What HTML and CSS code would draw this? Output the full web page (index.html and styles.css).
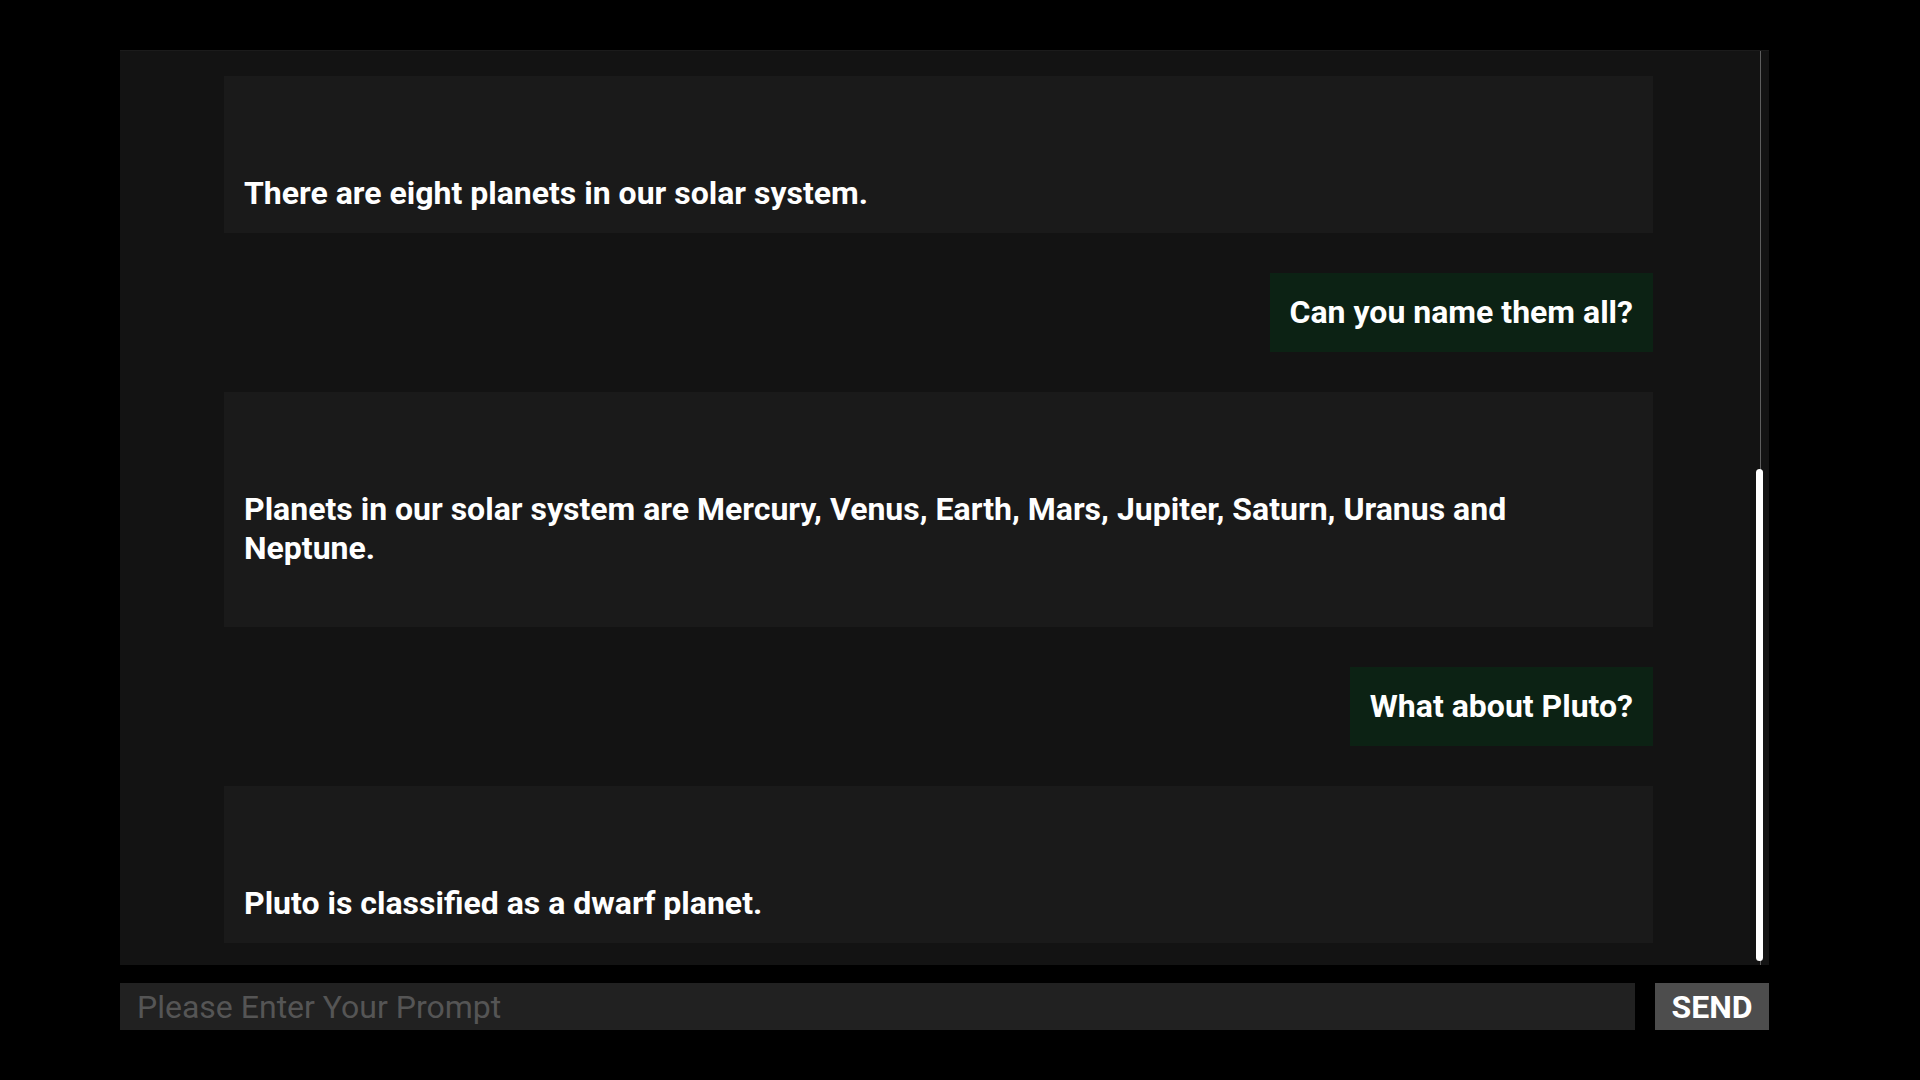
FILE: index.html
```html
<!DOCTYPE html>
<html lang="en">
<head>
<meta charset="utf-8">
<title>Chat</title>
<link rel="stylesheet" href="styles.css">
</head>
<body>
<div class="app">
  <div class="chat">
    <div class="thread">
      <div class="msg bot">There are eight planets in our solar system.</div>
      <div class="msg user">Can you name them all?</div>
      <div class="msg bot tail">Planets in our solar system are Mercury, Venus, Earth, Mars, Jupiter, Saturn, Uranus and Neptune.</div>
      <div class="msg user">What about Pluto?</div>
      <div class="msg bot">Pluto is classified as a dwarf planet.</div>
    </div>
    <div class="scrollbar" aria-hidden="true"><div class="thumb"></div></div>
  </div>
  <form class="composer">
    <input class="prompt" type="text" placeholder="Please Enter Your Prompt">
    <button class="send" type="button">SEND</button>
  </form>
</div>
</body>
</html>
```
FILE: styles.css
```css
html, body {
  margin: 0;
  background: #000;
}

body {
  font-family: Roboto, "Liberation Sans", sans-serif;
}

.app {
  width: 1649px;
  margin: 50px 0 0 120px;
}

.chat {
  position: relative;
  height: 915px;
  background: #131313;
  border-top: 1px solid #1b1b1b;
  box-sizing: border-box;
  overflow: hidden;
}

.thread {
  display: flex;
  flex-direction: column;
  gap: 40px;
  padding: 25px 116px 22px 104px;
}

.msg {
  font-size: 32px;
  line-height: 39px;
  font-weight: 700;
  color: #fff;
}

.bot {
  background: #1a1a1a;
  padding: 98px 40px 20px 20px;
}

.bot.tail {
  padding-bottom: 59px;
}

.user {
  align-self: flex-end;
  background: #0c2214;
  padding: 20px;
}

.scrollbar {
  position: absolute;
  top: 0;
  bottom: 0;
  right: 6px;
  width: 7px;
}

.scrollbar::before {
  content: "";
  position: absolute;
  top: 0;
  bottom: 0;
  left: 4px;
  width: 1px;
  background: #5e5e5e;
}

.thumb {
  position: absolute;
  top: 418px;
  bottom: 4px;
  left: 0;
  right: 0;
  background: #fff;
  border-radius: 4px;
}

.composer {
  display: flex;
  gap: 20px;
  margin: 18px 0 0;
}

.prompt {
  flex: 1;
  height: 47px;
  box-sizing: border-box;
  background: #212121;
  border: none;
  outline: none;
  padding: 0 17px;
  font-family: Roboto, "Liberation Sans", sans-serif;
  font-size: 32px;
  color: #fff;
}

.prompt::placeholder {
  color: #555;
}

.send {
  width: 114px;
  height: 47px;
  background: #4d4d4d;
  border: none;
  padding: 0;
  font-family: Roboto, "Liberation Sans", sans-serif;
  font-size: 32px;
  font-weight: 700;
  color: #fff;
}
```
